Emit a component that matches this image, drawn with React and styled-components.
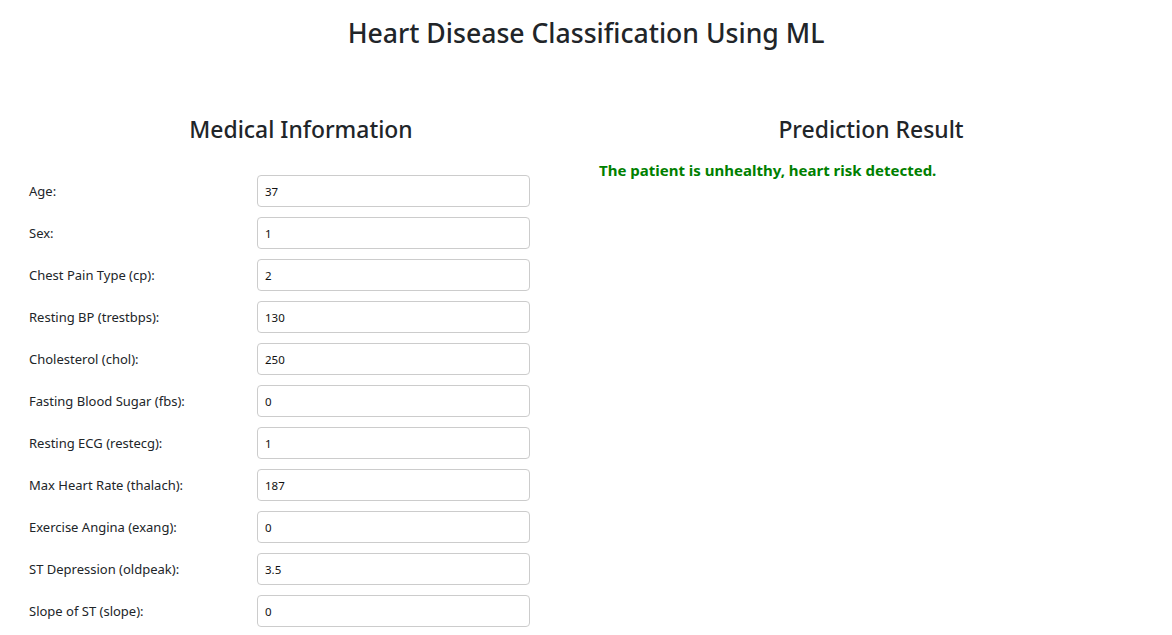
import React from "react";
import styled, { createGlobalStyle } from "styled-components";

const GlobalStyle = createGlobalStyle`
  body {
    margin: 0;
    background: #fff;
    font-family: "Noto Sans", sans-serif;
    color: #212529;
  }
`;

const Page = styled.div`
  padding: 0 16px;
`;

const Title = styled.h1`
  margin: 0;
  padding-top: 16px;
  font-size: 26.6px;
  font-weight: 500;
  line-height: 34px;
  text-align: center;
`;

const Columns = styled.div`
  display: flex;
  margin-top: 65px;
`;

const Column = styled.div`
  flex: 1;
  padding: 0 13px;
`;

const SectionTitle = styled.h2`
  margin: 0 0 ${(p) => p.gap}px;
  font-size: 22.9px;
  font-weight: 500;
  line-height: 30px;
  text-align: center;
`;

const Form = styled.form`
  display: flex;
  flex-direction: column;
  gap: 10px;
`;

const Row = styled.div`
  display: grid;
  grid-template-columns: 228px 273px;
  align-items: center;
`;

const Label = styled.label`
  font-size: 13px;
`;

const Input = styled.input`
  box-sizing: border-box;
  height: 32px;
  padding: 0 7px;
  border: 1px solid #ccc;
  border-radius: 4px;
  font-family: inherit;
  font-size: 11.5px;
  color: #111;
`;

const Result = styled.p`
  margin: 0;
  font-size: 15px;
  font-weight: 700;
  line-height: 20px;
  color: green;
`;

const fields = [
  ["Age:", "37"],
  ["Sex:", "1"],
  ["Chest Pain Type (cp):", "2"],
  ["Resting BP (trestbps):", "130"],
  ["Cholesterol (chol):", "250"],
  ["Fasting Blood Sugar (fbs):", "0"],
  ["Resting ECG (restecg):", "1"],
  ["Max Heart Rate (thalach):", "187"],
  ["Exercise Angina (exang):", "0"],
  ["ST Depression (oldpeak):", "3.5"],
  ["Slope of ST (slope):", "0"],
];

export default function App() {
  return (
    <Page>
      <GlobalStyle />
      <Title>Heart Disease Classification Using ML</Title>
      <Columns>
        <Column>
          <SectionTitle gap={30}>Medical Information</SectionTitle>
          <Form>
            {fields.map(([label, value], index) => (
              <Row key={`field-${index}`}>
                <Label>{label}</Label>
                <Input defaultValue={value} />
              </Row>
            ))}
          </Form>
        </Column>
        <Column>
          <SectionTitle gap={15}>Prediction Result</SectionTitle>
          <Result>The patient is unhealthy, heart risk detected.</Result>
        </Column>
      </Columns>
    </Page>
  );
}
